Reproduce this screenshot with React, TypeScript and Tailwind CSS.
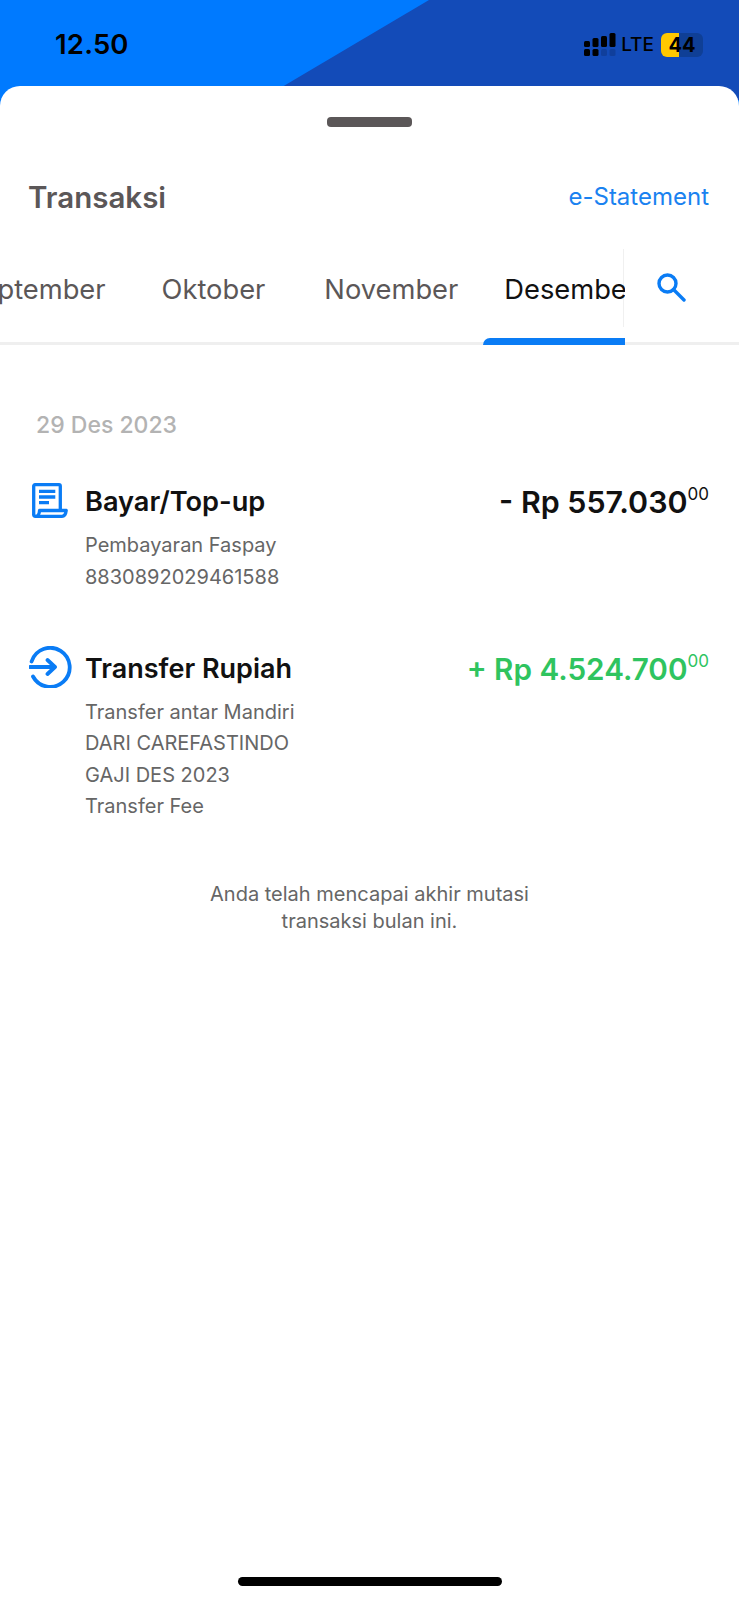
import React from 'react';

const tabs = ['September', 'Oktober', 'November'];

const ReceiptIcon = () => (
  <svg width="36" height="35" viewBox="0 0 36 35" fill="none" stroke="#0a7cf5" strokeWidth="3.300">
    <path d="M1.700 32V3a1.300 1.300 0 0 1 1.300-1.300h24A1.300 1.300 0 0 1 28.300 3v24" />
    <path d="M1.700 31.500a1.800 1.800 0 0 0 1.800 1.800H30c2.200 0 3.800-2.300 4.200-5.800H7.500c0 3-1.500 5.800-4 5.800" strokeLinejoin="round" />
    <path d="M7 8.300h16.300M7 14h16.300M7 19.700h10" />
  </svg>
);

const TransferIcon = () => (
  <svg width="43" height="42" viewBox="0 0 43 42" fill="none" stroke="#0a7cf5" strokeWidth="3.800">
    <path d="M2.600 15.500a19.500 19.500 0 1 1 1.400 15" strokeLinecap="round" />
    <path d="M1 21h25M18.500 14l7.500 7-7.500 7" strokeLinecap="round" strokeLinejoin="round" />
  </svg>
);

const SearchIcon = () => (
  <svg width="29" height="29" viewBox="0 0 29 29" fill="none" stroke="#0a7cf5" strokeWidth="3.400">
    <circle cx="10.500" cy="10.500" r="8.500" />
    <path d="M16.500 16.500 27 27" strokeLinecap="round" />
  </svg>
);

const SignalIcon = () => (
  <svg width="32" height="24" viewBox="0 0 32 24" fill="#000">
    <rect x="0" y="8" width="6" height="6" rx="1.500" />
    <rect x="0" y="16" width="6" height="7" rx="1.500" />
    <rect x="8.500" y="5" width="6" height="9" rx="1.500" />
    <rect x="8.500" y="16" width="6" height="7" rx="1.500" />
    <rect x="17" y="3" width="6" height="11" rx="1.500" />
    <rect x="17" y="16" width="6" height="7" rx="1.500" opacity="0.15" />
    <rect x="25.500" y="0" width="6" height="14" rx="1.500" />
    <rect x="25.500" y="16" width="6" height="7" rx="1.500" opacity="0.15" />
  </svg>
);

const Amount = ({ text, className }: { text: string; className: string }) => (
  <div className={`flex items-start font-semibold leading-[36px] ${className}`}>
    <span>{text}</span>
    <span className="mt-[1px] text-[17px] font-normal leading-[18px]">00</span>
  </div>
);

export default function App() {
  return (
    <div className="relative h-[1600px] w-[739px] overflow-hidden bg-[#007aff] font-['Inter',sans-serif]">
      {/* diagonal shade behind the status bar */}
      <div className="absolute inset-x-0 top-0 h-[100px] bg-[#134bb8] [clip-path:polygon(429px_0,100%_0,100%_100%,260px_100%)]" />

      <div className="relative flex h-[86px] items-center justify-between pl-[55px] pr-[36px] pt-[4px]">
        <span className="text-[27.500px] font-semibold tracking-[0.2px] text-black">12.50</span>
        <div className="flex items-center gap-[5px]">
          <SignalIcon />
          <span className="text-[19px] font-medium text-black">LTE</span>
          <div className="ml-[2px] flex h-[24px] w-[42px] overflow-hidden rounded-[6px] bg-[#0f3f96]">
            <div className="relative w-[42px] text-center text-[20px] font-bold leading-[24px] text-black">
              <div className="absolute inset-y-0 left-0 w-[18px] bg-[#ffc800]" />
              <span className="relative">44</span>
            </div>
          </div>
        </div>
      </div>

      <div className="relative flex h-[1514px] flex-col rounded-t-[20px] bg-white">
        <div className="mx-auto mt-[31px] h-[10px] w-[85px] rounded-[4px] bg-[#5b5758]" />

        <div className="mt-[52px] flex items-center justify-between pl-[28px] pr-[30px]">
          <span className="text-[29.500px] font-semibold leading-[36px] text-[#5b5758]">Transaksi</span>
          <span className="text-[24px] leading-[36px] text-[#1a82f0]">e-Statement</span>
        </div>

        <div className="relative mt-[34px] flex h-[96px] border-b-[3px] border-[#efefef]">
          <div className="flex h-[96px] w-[625px] shrink-0 overflow-hidden">
            <div className="-ml-[36px] flex shrink-0">
              {tabs.map((tab) => (
                <div key={tab} className="mr-[59px] pt-[23px] text-[27.300px] leading-[36px] text-[#5b5758] first:mr-[56px]">
                  {tab}
                </div>
              ))}
              <div className="relative -ml-[34px] w-[142px] shrink-0 pl-[21px] pt-[23px] text-[27.300px] leading-[36px] text-[#111]">
                Desember
                <div className="absolute bottom-0 left-0 h-[7px] w-[142px] rounded-tl-[10px] bg-[#0a7cf5]" />
              </div>
            </div>
          </div>
          <div className="-ml-[2px] h-[78px] flex-1 border-l border-[#f0f0f0] pl-[33px] pt-[24px]">
            <SearchIcon />
          </div>
        </div>

        <div className="mt-[65px] pl-[36px] text-[23px] font-medium leading-[30px] text-[#b3b3b3]">29 Des 2023</div>

        <div className="mt-[44px] flex justify-between pr-[30px]">
          <div className="flex">
            <div className="-mt-[1px] ml-[32px] w-[53px]">
              <ReceiptIcon />
            </div>
            <div>
              <div className="text-[27.200px] font-semibold leading-[36px] text-[#111]">Bayar/Top-up</div>
              <div className="mt-[10px] text-[20px] leading-[31.500px] text-[#666]">
                <div>Pembayaran Faspay</div>
                <div>8830892029461588</div>
              </div>
            </div>
          </div>
          <Amount text="- Rp 557.030" className="text-[30.400px] text-[#111]" />
        </div>

        <div className="mt-[58px] flex justify-between pr-[30px]">
          <div className="flex">
            <div className="-mt-[5px] ml-[29px] w-[56px]">
              <TransferIcon />
            </div>
            <div>
              <div className="text-[27px] font-semibold leading-[36px] text-[#111]">Transfer Rupiah</div>
              <div className="mt-[10px] text-[20px] leading-[31.300px] text-[#666]">
                <div>Transfer antar Mandiri</div>
                <div>DARI CAREFASTINDO</div>
                <div>GAJI DES 2023</div>
                <div>Transfer Fee</div>
              </div>
            </div>
          </div>
          <Amount text="+ Rp 4.524.700" className="text-[29.700px] text-[#2fc45f]" />
        </div>

        <div className="mt-[59px] text-center text-[20px] leading-[27px] text-[#666]">
          <div>Anda telah mencapai akhir mutasi</div>
          <div>transaksi bulan ini.</div>
        </div>

        <div className="mx-auto mb-[14px] mt-auto h-[9px] w-[264px] rounded-full bg-black" />
      </div>
    </div>
  );
}
